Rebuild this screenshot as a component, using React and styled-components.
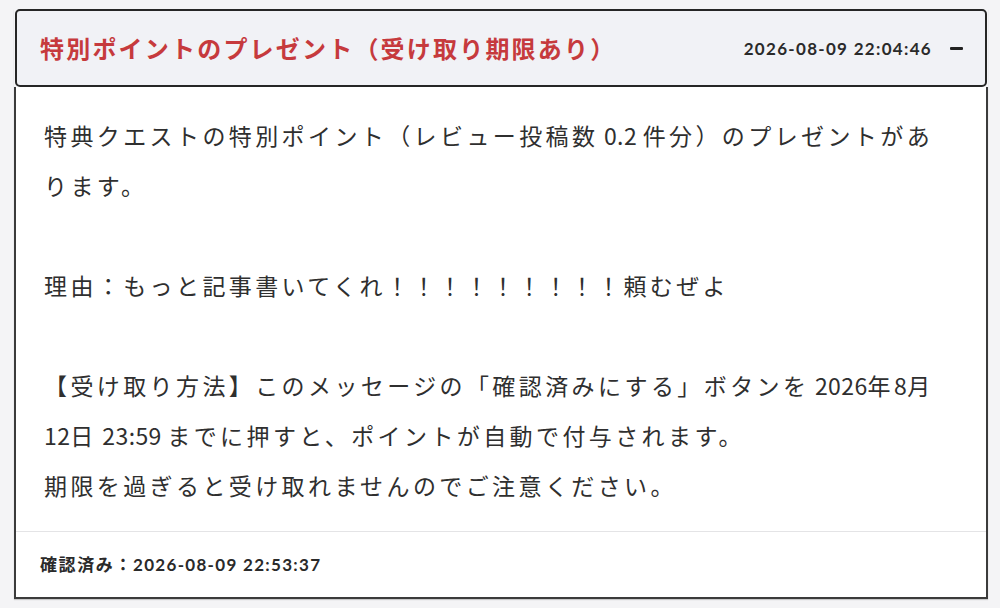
import styled, { createGlobalStyle } from 'styled-components'

const GlobalStyle = createGlobalStyle`
  html, body {
    margin: 0;
    background: #f4f4f6;
  }
  body {
    font-family: "Noto Sans CJK JP", "Noto Sans", sans-serif;
    color: #333;
  }
`

const Page = styled.div`
  padding: 9px 12px 8px 14px;
`

const Card = styled.section`
  width: 974px;
  box-shadow: 0 1px 1px rgba(0, 0, 0, 0.18);
`

const Header = styled.header`
  box-sizing: border-box;
  height: 78px;
  margin: 0 1px;
  padding: 0 22px 0 23px;
  display: flex;
  align-items: center;
  justify-content: space-between;
  background: #f1f2f6;
  border: 2px solid #262626;
  border-radius: 5px;
`

const Title = styled.h2`
  margin: 0;
  font-size: 24px;
  font-weight: 700;
  letter-spacing: 2.2px;
  color: #c63a3d;
  line-height: 1;
`

const Meta = styled.div`
  display: flex;
  align-items: center;
  gap: 18px;
`

const Stamp = styled.span`
  font-family: Lato, "Noto Sans CJK JP", sans-serif;
  font-size: 17px;
  font-weight: 700;
  color: #2a2a2a;
  letter-spacing: 1.3px;
`

const Toggle = styled.span`
  display: block;
  width: 13px;
  height: 3px;
  border-radius: 1px;
  background: #222;
`

const Body = styled.div`
  background: #fff;
  border: 2px solid #3b3b3b;
  border-top: none;
`

const Content = styled.div`
  padding: 23px 28px 21px;
  font-size: 23px;
  line-height: 50px;
  letter-spacing: 3.4px;
  color: #2f2f2f;
`

const Para = styled.p`
  margin: 0 0 ${({ $gap }) => ($gap ? '50px' : '0')};
`

// latin runs sit tighter than the kana around them
const Num = styled.span`
  letter-spacing: 0.4px;
`

const Footer = styled.footer`
  border-top: 1px solid #e4e4e6;
  padding: 20px 24px;
  line-height: 24px;
  font-size: 17px;
  font-weight: 700;
  letter-spacing: 1.6px;
  color: #2a2a2a;
`

const FooterDate = styled.span`
  font-family: Lato, "Noto Sans CJK JP", sans-serif;
  letter-spacing: 1.3px;
`

export default function App() {
  return (
    <Page>
      <GlobalStyle />
      <Card>
        <Header>
          <Title>特別ポイントのプレゼント（受け取り期限あり）</Title>
          <Meta>
            <Stamp>2026-08-09 22:04:46</Stamp>
            <Toggle />
          </Meta>
        </Header>
        <Body>
          <Content>
            <Para $gap>
              特典クエストの特別ポイント（レビュー投稿数<Num> 0.2 </Num>件分）のプレゼントがあります。
            </Para>
            <Para $gap>理由：もっと記事書いてくれ！！！！！！！！！頼むぜよ</Para>
            <Para>
              【受け取り方法】このメッセージの「確認済みにする」ボタンを<Num> 2026</Num>年<Num>8</Num>月<Num>12</Num>日<Num> 23:59 </Num>までに押すと、ポイントが自動で付与されます。
              <br />
              期限を過ぎると受け取れませんのでご注意ください。
            </Para>
          </Content>
          <Footer>
            確認済み：<FooterDate>2026-08-09 22:53:37</FooterDate>
          </Footer>
        </Body>
      </Card>
    </Page>
  )
}
